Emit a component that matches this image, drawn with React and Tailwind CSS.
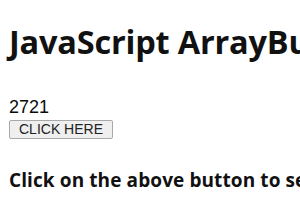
export default function App() {
  return (
    <div className="w-[300px] h-[210px] overflow-hidden bg-white text-[#111] pl-[9px]">
      {/* 제목 */}
      <h1 className="pt-[23px] whitespace-nowrap text-[32.5px] leading-[38px] font-bold font-['Open_Sans',sans-serif] tracking-[-0.2px]">
        JavaScript ArrayBuffer byteLength Property
      </h1>

      {/* 결과 */}
      <p className="mt-[35px] text-[18px] leading-[22px] text-[#0a0a0a] font-['Liberation_Sans',Arial,sans-serif]">2721</p>
      <button className="mt-[2px] block h-[19px] w-[104px] border border-[#a9a9a9] bg-[#efefef] rounded-[2px] text-[14px] leading-[17px] text-[#222] font-['Liberation_Sans',Arial,sans-serif]">
        CLICK HERE
      </button>

      {/* 설명 */}
      <h3 className="mt-[30px] whitespace-nowrap text-[19px] leading-[22px] font-bold font-['Open_Sans',sans-serif] tracking-[0.1px]">
        Click on the above button to see the byte length
      </h3>
    </div>
  );
}
